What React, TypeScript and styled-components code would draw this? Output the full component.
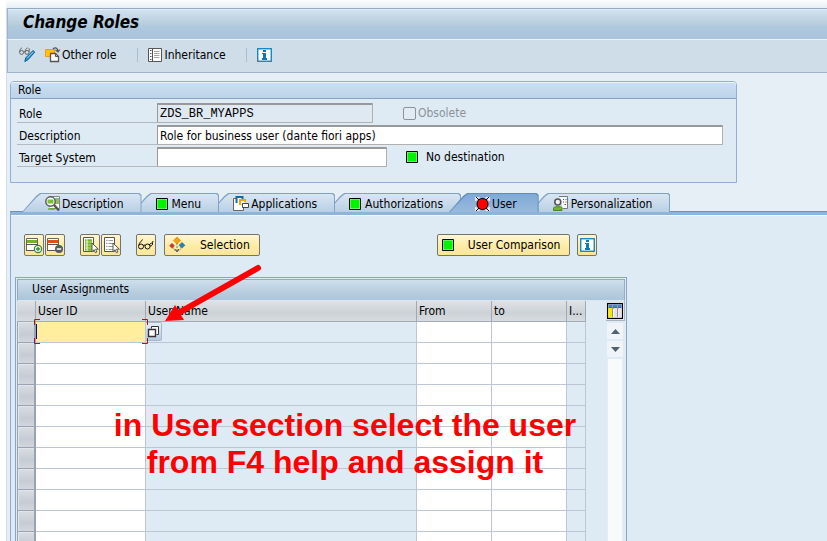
import React from "react";
import styled, { createGlobalStyle, css } from "styled-components";

const GlobalStyle = createGlobalStyle`
  *, *::before, *::after { box-sizing: border-box; }
  html, body { margin: 0; padding: 0; }
  body, button, input, table {
    font-family: "DejaVu Sans Condensed", "DejaVu Sans", sans-serif;
    font-size: 12px;
    line-height: 16px;
    color: #000;
  }
  svg { display: block; flex: none; }
`;

/* ---------- window ---------- */

const Page = styled.div`
  height: 100vh;
  overflow: hidden;
  display: flex;
  flex-direction: column;
  padding: 8px 0 0 6px;
  background: linear-gradient(#fdfdfe, #e7eff6 8px) 6px 0 no-repeat, #fff;
`;

const Window = styled.main`
  flex: 1;
  min-height: 0;
  display: flex;
  flex-direction: column;
  background: #e7eff6;
  border-left: 1px solid #d2dfea;
`;

const TitleBar = styled.header`
  height: 32px;
  flex: none;
  padding: 4px 15px;
  border-top: 1px solid #92aac4;
  border-left: 1px solid #9fb4ca;
  border-bottom: 1px solid #e9f2f8;
  box-shadow: inset 0 1px #e3edf5;
  background: linear-gradient(#d3e2f0, #b8cedd 50%, #aec8de 60%, #abc3dc);
`;

const Title = styled.h1`
  margin: 0;
  font-size: 17px;
  line-height: 18px;
  font-weight: bold;
  font-style: italic;
`;

const Toolbar = styled.div`
  height: 33px;
  flex: none;
  display: flex;
  align-items: center;
  padding: 0 11px 2px;
  border-left: 1px solid #9fb4ca;
  border-bottom: 1px solid #9fb4ca;
  background: #cfdde8;
`;

const ToolButton = styled.button`
  display: flex;
  align-items: center;
  gap: 2px;
  height: 22px;
  padding: 0;
  border: 0;
  background: none;
`;

const ToolGap = styled.span`
  width: 9px;
`;

const Divider = styled.span`
  width: 1px;
  height: 14px;
  margin: 0 10px 0 20px;
  background: #a7bed2;
`;

/* ---------- role group ---------- */

const Group = styled.section`
  flex: none;
  max-width: 727px;
  margin: 8px 3px 0;
  border: 1px solid #8fb0d0;
  border-radius: 4px 4px 0 0;
  background: #deeaf4;
`;

const GroupTitle = styled.h2`
  margin: 0;
  height: 17px;
  padding: 0 7px;
  font-size: 12px;
  line-height: 16px;
  font-weight: normal;
  border-bottom: 1px solid #86a3c6;
  border-radius: 3px 3px 0 0;
  background: linear-gradient(#cfdff0, #bcd3ea);
  box-shadow: inset 0 1px #eaf3fa;
`;

const Fields = styled.div`
  display: grid;
  gap: 2px;
  padding: 4px 13px 15px 6px;
`;

const FieldRow = styled.div`
  display: flex;
  align-items: flex-end;
`;

const FieldLabel = styled.label`
  width: 140px;
  height: 20px;
  flex: none;
  padding: 3px 2px 0;
  border-bottom: 1px solid #b3b9bf;
`;

const Field = styled.input<{ $width?: number; $mono?: boolean }>`
  height: 20px;
  min-width: 0;
  ${(p) => (p.$width ? css`width: ${p.$width}px;` : css`flex: 1;`)}
  padding: 1px 2px 0;
  border: 1px solid #b0b0b0;
  border-top: 2px solid #999;
  border-left-color: #999;
  border-radius: 1px;
  outline: 0;
  background: ${(p) => (p.readOnly ? "#dfe9f2" : "#fff")};
  ${(p) => p.$mono && css`font-family: "Liberation Mono", monospace;`}
`;

const Check = styled.label`
  display: flex;
  align-items: center;
  gap: 2px;
  height: 20px;
  margin-left: 30px;
  color: #8c9299;
  input {
    appearance: none;
    width: 13px;
    height: 13px;
    margin: 0;
    border: 1px solid #8f9398;
    border-radius: 2px;
    background: #e1ebf4;
  }
`;

const Status = styled.span`
  display: flex;
  align-items: center;
  gap: 8px;
  height: 20px;
  margin-left: 19px;
`;

/* ---------- tabs ---------- */

const TabList = styled.div`
  flex: none;
  display: flex;
  height: 19px;
  margin-top: 10px;
  padding-left: 15px;
  isolation: isolate;
`;

const TabButton = styled.button<{ $active?: boolean; $light?: boolean; $order: number }>`
  position: relative;
  z-index: ${(p) => (p.$active ? 20 : 10 - p.$order)};
  display: flex;
  align-items: center;
  gap: ${(p) => (p.$light ? 4 : 2)}px;
  height: 19px;
  margin-left: ${(p) => (p.$active ? -3 : 0)}px;
  margin-right: -9px;
  padding: ${(p) => (p.$active ? "2px 22px 0 26px" : "2px 18px 0 23px")};
  border: 0;
  background: none;
  white-space: nowrap;
  &::before, &::after {
    content: "";
    position: absolute;
    z-index: -1;
    inset: 0;
    clip-path: polygon(0 100%, 14px 3px, 18px 0, calc(100% - 2px) 0, 100% 2px, 100% 100%);
    background: ${(p) => (p.$active ? "#5f8dc0" : "#7fa3c6")};
  }
  &::after {
    inset: 1px 1px 0;
    background: ${(p) =>
      p.$active ? "linear-gradient(#7faad6, #9ab9dd)" : "linear-gradient(#d9e6f2, #b9cfe5)"};
  }
`;

const TabPanel = styled.section`
  flex: 1;
  min-height: 0;
  display: flex;
  flex-direction: column;
  margin-left: 3px;
  padding: 19px 0 0 4px;
  border-top: 3px solid #8fb4d9;
  border-left: 1px solid #8aaccf;
  background: #deeaf4;
  box-shadow: inset 0 1px #f0f6fb, 0 -1px #6b93bf;
`;

const Actions = styled.div`
  flex: none;
  display: flex;
  gap: 1px;
  padding-left: 9px;
`;

const Action = styled.button<{ $wide?: boolean }>`
  display: flex;
  align-items: center;
  justify-content: ${(p) => (p.$wide ? "flex-start" : "center")};
  gap: 14px;
  height: 22px;
  ${(p) => (p.$wide ? css`padding: 0 9px 0 4px;` : css`width: 20px; padding: 0;`)}
  border: 1px solid #77736a;
  border-radius: 2px;
  background: linear-gradient(#fff6d4, #fdeca4 55%, #fae69b);
  white-space: nowrap;
`;

const ActionGap = styled.span<{ $size: number }>`
  width: ${(p) => p.$size}px;
`;

/* ---------- table control ---------- */

const GridPanel = styled.div`
  position: relative;
  flex: 1;
  min-height: 0;
  max-width: 612px;
  margin-top: 21px;
  padding: 1px 1px 0;
  border: 1px solid #86a5c8;
  border-bottom: 0;
  display: flex;
  flex-direction: column;
`;

const GridTitle = styled.h2`
  flex: none;
  margin: 0;
  height: 22px;
  padding: 0 14px;
  font-size: 12px;
  line-height: 18px;
  font-weight: normal;
  border: 1px solid #97a9bf;
  border-bottom: 1px solid #dbe6ef;
  background: linear-gradient(#cfdfec, #b8cedf 60%, #abc5dc);
`;

const GridBody = styled.div`
  flex: 1;
  min-height: 0;
  overflow: hidden;
  display: flex;
  justify-content: space-between;
`;

const Table = styled.table`
  table-layout: fixed;
  width: 569px;
  flex: none;
  align-self: flex-start;
  border-collapse: separate;
  border-spacing: 0;
`;

const HeadCell = styled.th<{ $width: number }>`
  width: ${(p) => p.$width}px;
  height: 21px;
  padding: 0 2px;
  font-weight: normal;
  text-align: left;
  white-space: nowrap;
  border-right: 1px solid #a0a8b2;
  border-bottom: 1px solid #a3abb6;
  background: linear-gradient(#dfe2e5, #cdd2d7 60%, #d8dce0);
`;

const RowHead = styled.th`
  height: 21px;
  padding: 0;
  border: solid #9aa3b1;
  border-width: 0 2px 1px 1px;
  background: linear-gradient(#d9dde3, #c6ccd5 60%, #d2d6dd);
  box-shadow: inset 1px 1px #e2e5ea;
`;

const Cell = styled.td<{ $open?: boolean }>`
  position: relative;
  height: 21px;
  padding: 0;
  border-right: 1px solid #bcc6d4;
  border-bottom: 1px solid #bcc6d4;
  background: ${(p) => (p.$open ? "#fff" : "#deeaf4")};
`;

const CellInput = styled.input<{ $focused?: boolean }>`
  display: block;
  width: 100%;
  height: 20px;
  padding: 0 2px;
  border: 0;
  outline: 0;
  background: ${(p) => (p.$focused ? "#ffee9e" : "transparent")};
`;

const Caret = styled.span`
  position: absolute;
  left: 0;
  top: 2px;
  width: 1px;
  height: 15px;
  background: #10105a;
`;

const FocusFrame = styled.svg`
  position: absolute;
  z-index: 2;
  left: -2px;
  top: -3px;
  pointer-events: none;
`;

const HelpButton = styled.button`
  position: absolute;
  z-index: 1;
  left: 110px;
  top: 0;
  width: 16px;
  height: 19px;
  padding: 2px 1px;
  border: 1px solid #a9b8c9;
  border-left: 0;
  border-radius: 0 2px 2px 0;
  background: linear-gradient(#e6eef6, #b6cbe1);
`;

const SideBar = styled.div`
  width: 20px;
  flex: none;
  display: flex;
  flex-direction: column;
  align-items: center;
`;

const ConfigButton = styled.button`
  width: 19px;
  height: 20px;
  flex: none;
  padding: 1px 1px;
  border: 0;
  border-right: 1px solid #aab2bc;
  border-bottom: 1px solid #aab2bc;
  background: #dfe2e5;
`;

const ScrollButton = styled.button`
  width: 16px;
  height: 16px;
  flex: none;
  display: grid;
  place-items: center;
  margin-top: 2px;
  padding: 0;
  border: 0;
  background: #f0f4f9;
`;

const ScrollTrack = styled.div`
  width: 16px;
  flex: 1;
  margin-top: 2px;
  border: solid #e9ecf2;
  border-width: 0 1px;
  background: #f9fafc;
`;

const Note = styled.p`
  position: absolute;
  z-index: 3;
  top: 129px;
  left: 94px;
  width: 470px;
  margin: 0;
  font: bold 32px/37px "Liberation Sans", Arial, sans-serif;
  text-align: center;
  white-space: nowrap;
  color: #fe0000;
`;

const Arrow = styled.svg`
  position: absolute;
  z-index: 3;
  top: -15px;
  left: 148px;
`;

/* ---------- icons ---------- */

const GreenSquare = () => (
  <svg width="12" height="12" viewBox="0 0 12 12" aria-hidden="true">
    <rect width="12" height="12" rx="1" fill="#000" />
    <rect x="1" y="1" width="10" height="10" fill="#b9f5c0" />
    <rect x="1.5" y="1.5" width="9" height="9" fill="#00f400" />
  </svg>
);

const InfoIcon = () => (
  <svg width="15" height="14" viewBox="0 0 15 14" aria-hidden="true">
    <rect x=".75" y=".75" width="13.5" height="12.5" fill="#fff" stroke="#0a7abf" strokeWidth="1.3" />
    <path d="M6 2h3v2H6zM5 5h4v5h1v2H5v-2h1V6H5z" fill="#0a7abf" />
  </svg>
);

const DisplayChangeIcon = () => (
  <svg width="17" height="16" viewBox="0 0 17 16" fill="none" aria-hidden="true">
    <g stroke="#666" strokeWidth="1">
      <circle cx="2.6" cy="5.4" r="2" />
      <circle cx="8" cy="5.4" r="2" />
      <path d="M.6 5C.7 3 1.600 1.200 3 .8M6 5C6.200 3 7.200 1.200 8.600.8M4.500 4.800h1.600M10 5c.4-1.500.4-2.800 0-3.800" />
    </g>
    <path d="M14 3.500 15.700 5.200 9 12.700 5.800 14.600 6.700 10.900z" fill="#3492c6" stroke="#075f94" />
    <path d="M8.300 11 14 5" stroke="#91cbea" />
  </svg>
);

const OtherRoleIcon = () => (
  <svg width="15" height="16" viewBox="0 0 15 16" fill="none" aria-hidden="true">
    <path d="M.5 2.5h9v7h-9z" fill="#ffc20e" stroke="#f39a12" />
    <path d="M5.5 6.5h5l3 3v5h-8z" fill="#fff" stroke="#555" strokeWidth="1.3" />
    <path d="M10.5 6.5v3h3" stroke="#555" />
    <path d="M8 2c2-2 5-1.2 5 2.5M10.5 3l2.500 2 1.700-2.400" stroke="#555" strokeWidth="1.2" />
  </svg>
);

const InheritanceIcon = () => (
  <svg width="15" height="14" viewBox="0 0 15 14" fill="none" aria-hidden="true">
    <path d="M.5.5h13v13H.5z" fill="#fff" stroke="#555" />
    <path d="M4.5 1v12" stroke="#555" />
    <path d="M2 2.5h1.500M2 5.5h1.500M2 8.500h1.500M2 11.500h1.500" stroke="#555" />
    <path d="M6 3.5h5.500M6 5.5h5.500M6 7.5h5.500M6 9.5h5.500" stroke="#a7a7a7" />
  </svg>
);

const DescriptionIcon = () => (
  <svg width="15" height="16" viewBox="0 0 15 16" fill="none" aria-hidden="true">
    <path d="M4.5.5h10v12H5" fill="#f7faf7" stroke="#888" />
    <path d="M10 3h4M10 5h4M10 7h4M3 13h7" stroke="#6cab2f" strokeWidth="1.5" />
    <circle cx="5.5" cy="5.5" r="4.7" fill="#fff" stroke="#555" strokeWidth="1.4" />
    <path d="M2.5 3.5h6v4h-6z" fill="#7bc032" />
    <path d="m9 9 5 5.5" stroke="#555" strokeWidth="2.4" />
  </svg>
);

const ApplicationsIcon = () => (
  <svg width="16" height="16" viewBox="0 0 16 16" fill="none" aria-hidden="true">
    <path d="M3.5 2.5h-3v12h10v-3" fill="#fff" stroke="#666" />
    <path d="M3.5 7V1h6v2" fill="#fff" stroke="#156a9b" strokeWidth="2" />
    <path d="M7 9V4h5v2" fill="#fff" stroke="#f5a30a" strokeWidth="2" />
    <path d="M9.5 7.5h6v4h-6z" fill="#fff" stroke="#444" />
  </svg>
);

const RedLightIcon = () => (
  <svg width="15" height="14" viewBox="0 0 15 14" aria-hidden="true">
    <path d="M0 0h5L1 4H0zM15 0h-5l4 4h1zM0 14h5l-4-4H0zM15 14h-5l4-4h1z" fill="#f8e9ef" />
    <path d="m1 0 3 3M14 0l-3 3M1 14l3-3M14 14l-3-3" stroke="#000" />
    <circle cx="7.5" cy="7" r="5.5" fill="#fe0000" stroke="#000" />
  </svg>
);

const PersonIcon = () => (
  <svg width="16" height="16" viewBox="0 0 16 16" fill="none" aria-hidden="true">
    <path d="M6 .5h8.500v12H10" fill="#fafafa" stroke="#777" />
    <path d="M10 3.5h1M12.500 3.5h1M10 6h1M12.500 6h1M11.500 8.500h1.500" stroke="#555" strokeWidth="1.2" />
    <circle cx="4.8" cy="6" r="3" fill="#f2f2f2" stroke="#555" strokeWidth="1.6" />
    <path d="M.5 14.500v-2c0-1 1-1.700 2-1.700h5c1 0 1.500.7 1.500 1.700v2z" fill="#72b62b" stroke="#4e8220" />
  </svg>
);

const RowEditIcon = ({ remove = false }: { remove?: boolean }) => (
  <svg width="18" height="18" viewBox="0 0 18 18" fill="none" aria-hidden="true">
    <path d="M1.5 2.5h11v12h-11z" fill="#fff" stroke="#666" />
    <path d="M2 5.5h10" stroke={remove ? "#dc5215" : "#76b51c"} strokeWidth="3" />
    <path d="M1 8.5h12M1 14.500h8" stroke="#555" />
    {remove ? (
      <>
        <circle cx="13" cy="13" r="4" fill="#555b63" />
        <path d="M10.800 13h4.400" stroke="#fff" strokeWidth="1.5" />
      </>
    ) : (
      <>
        <circle cx="13" cy="13" r="3.6" fill="#fff" stroke="#37863b" strokeWidth="1.2" />
        <path d="M10.800 13h4.400M13 10.800v4.400" stroke="#37863b" strokeWidth="1.3" />
      </>
    )}
  </svg>
);

const SelectRowsIcon = ({ all = false }: { all?: boolean }) => (
  <svg width="17" height="18" viewBox="0 0 17 18" fill="none" aria-hidden="true">
    <path d="M1.5 1.5h10v14h-10z" fill="#fff" stroke="#555" />
    <path
      d="M3 4.5h1.500M3 7.5h1.500M3 10.500h1.500M3 13.500h1.500M5.500 4.5h4.500M5.500 7.5h4.500M5.500 10.500h4.500M5.500 13.500h4.500"
      stroke={all ? "#76b51c" : "#999"}
      strokeWidth={all ? 2.5 : 1}
    />
    <path d="M10 7v8.700l2-2 1.300 3 1.600-.7-1.300-2.800h2.700z" fill="#fff" stroke="#555" />
  </svg>
);

const GlassesIcon = () => (
  <svg width="18" height="16" viewBox="0 0 18 16" fill="none" stroke="#111" aria-hidden="true">
    <circle cx="4" cy="9.5" r="2.5" />
    <circle cx="10.5" cy="9.5" r="2.5" />
    <path d="M1.800 8.500C2 5.500 4.500 4.500 5.500 2.500M6.200 8.500 8 8M12.300 8c.7-2.500 4-1.200 3.700-4M13 9c2 0 2.800-1.400 2.500-3" />
  </svg>
);

const SelectionIcon = () => (
  <svg width="17" height="16" viewBox="0 0 17 16" fill="none" aria-hidden="true">
    <path d="M8 6v8M4 9.500c0 3 1 4 4 4s4-1 4-4" stroke="#777" strokeDasharray="2 1" />
    <path d="m8 0 3.500 3.500L8 7 4.500 3.500z" fill="#f7a30b" stroke="#cf7a08" strokeWidth=".6" />
    <path d="m3 6 2.800 2.800L3 11.600.2 8.800z" fill="#c63d2f" />
    <path d="m13 5 3.300 3.300L13 11.600 9.700 8.300z" fill="#2d7fae" />
    <path d="m6 12 2 3 2-3" stroke="#555" />
  </svg>
);

const StackIcon = () => (
  <svg width="13" height="13" viewBox="0 0 13 13" fill="none" aria-hidden="true">
    <path d="M4.500 3.500v-2h7v8h-2" fill="#fff" stroke="#333" />
    <path d="M1.500 4.500h7v7h-7z" fill="#fff" stroke="#333" strokeWidth="1.400" />
  </svg>
);

const ConfigIcon = () => (
  <svg width="16" height="16" viewBox="0 0 16 16" aria-hidden="true">
    <rect x=".6" y=".6" width="14.8" height="14.8" fill="#fff" stroke="#000" strokeWidth="1.2" />
    <path d="M1.500 1.500h13v4h-13z" fill="#2a72b8" />
    <path d="M1.500 5h4v9h-4z" fill="#ffe800" />
    <path d="M7 5h3v9H7zM11.500 5h3v9h-3z" fill="#e3e3e6" />
    <path d="M5.500 2v12M10.500 2v12" stroke="#8f9398" />
    <path d="M1.500 3h13" stroke="#8dbbe0" strokeDasharray="1 1" />
  </svg>
);

const Triangle = ({ down = false }: { down?: boolean }) => (
  <svg width="9" height="5" viewBox="0 0 9 5" aria-hidden="true">
    <path d={down ? "M0 0h9L4.500 5z" : "M0 5h9L4.500 0z"} fill="#4f6070" />
  </svg>
);

/* ---------- data ---------- */

const tabs = [
  { label: "Description", icon: <DescriptionIcon /> },
  { label: "Menu", icon: <GreenSquare />, light: true },
  { label: "Applications", icon: <ApplicationsIcon /> },
  { label: "Authorizations", icon: <GreenSquare />, light: true },
  { label: "User", icon: <RedLightIcon />, active: true },
  { label: "Personalization", icon: <PersonIcon /> },
];

const columns = [
  { label: "User ID", width: 110, open: true },
  { label: "User Name", width: 271 },
  { label: "From", width: 75, open: true },
  { label: "to", width: 75, open: true },
  { label: "I...", width: 19 },
];

const rows = Array.from({ length: 24 }, (_, i) => i);

export default function App() {
  return (
    <>
      <GlobalStyle />
      <Page>
        <Window>
          <TitleBar>
            <Title>Change Roles</Title>
          </TitleBar>
          <Toolbar>
            <ToolButton aria-label="Display or change"><DisplayChangeIcon /></ToolButton>
            <ToolGap />
            <ToolButton><OtherRoleIcon />Other role</ToolButton>
            <Divider />
            <ToolButton><InheritanceIcon />Inheritance</ToolButton>
            <Divider />
            <ToolButton aria-label="Information"><InfoIcon /></ToolButton>
          </Toolbar>

          <Group>
            <GroupTitle>Role</GroupTitle>
            <Fields>
              <FieldRow>
                <FieldLabel htmlFor="role">Role</FieldLabel>
                <Field id="role" $width={216} $mono readOnly defaultValue="ZDS_BR_MYAPPS" />
                <Check><input type="checkbox" disabled />Obsolete</Check>
              </FieldRow>
              <FieldRow>
                <FieldLabel htmlFor="description">Description</FieldLabel>
                <Field id="description" defaultValue="Role for business user (dante fiori apps)" />
              </FieldRow>
              <FieldRow>
                <FieldLabel htmlFor="target">Target System</FieldLabel>
                <Field id="target" $width={230} />
                <Status><GreenSquare />No destination</Status>
              </FieldRow>
            </Fields>
          </Group>

          <TabList role="tablist">
            {tabs.map((tab, i) => (
              <TabButton
                key={tab.label}
                role="tab"
                aria-selected={!!tab.active}
                $active={tab.active}
                $light={tab.light}
                $order={i}
              >
                {tab.icon}
                {tab.label}
              </TabButton>
            ))}
          </TabList>

          <TabPanel role="tabpanel">
            <Actions>
              <Action aria-label="Insert row"><RowEditIcon /></Action>
              <Action aria-label="Delete row"><RowEditIcon remove /></Action>
              <ActionGap $size={13} />
              <Action aria-label="Select all"><SelectRowsIcon all /></Action>
              <Action aria-label="Deselect all"><SelectRowsIcon /></Action>
              <ActionGap $size={13} />
              <Action aria-label="Display"><GlassesIcon /></Action>
              <ActionGap $size={6} />
              <Action $wide><SelectionIcon />Selection</Action>
              <ActionGap $size={175} />
              <Action $wide><GreenSquare />User Comparison</Action>
              <ActionGap $size={5} />
              <Action aria-label="Information"><InfoIcon /></Action>
            </Actions>

            <GridPanel>
              <GridTitle>User Assignments</GridTitle>
              <GridBody>
                <Table aria-label="User Assignments">
                  <thead>
                    <tr>
                      <HeadCell $width={19} aria-label="Row" />
                      {columns.map((c) => (
                        <HeadCell key={c.label} $width={c.width}>{c.label}</HeadCell>
                      ))}
                    </tr>
                  </thead>
                  <tbody>
                    {rows.map((row) => (
                      <tr key={row}>
                        <RowHead scope="row" aria-label={`Row ${row + 1}`} />
                        {columns.map((c, i) => (
                          <Cell key={c.label} $open={c.open}>
                            {c.open && (
                              <CellInput aria-label={`${c.label}, row ${row + 1}`} $focused={row === 0 && i === 0} />
                            )}
                            {row === 0 && i === 0 && (
                              <>
                                <Caret />
                                <HelpButton aria-label="Input help"><StackIcon /></HelpButton>
                                <FocusFrame width="114" height="25" fill="none" stroke="#a01818" aria-hidden="true">
                                  <path d="M.5 6V.5H6M108 .5h5.500V6M.5 19v5.500H6M108 24.500h5.500V19" />
                                </FocusFrame>
                              </>
                            )}
                          </Cell>
                        ))}
                      </tr>
                    ))}
                  </tbody>
                </Table>
                <SideBar>
                  <ConfigButton aria-label="Table settings"><ConfigIcon /></ConfigButton>
                  <ScrollButton aria-label="Scroll up"><Triangle /></ScrollButton>
                  <ScrollButton aria-label="Scroll down"><Triangle down /></ScrollButton>
                  <ScrollTrack />
                </SideBar>
              </GridBody>
              <Arrow width="100" height="62" viewBox="0 0 100 62" aria-hidden="true">
                <path d="M94 5 16 49" stroke="#fe0000" strokeWidth="6" strokeLinecap="round" />
                <path d="M1 58 11 42l9 15z" fill="#fe0000" />
              </Arrow>
              <Note>
                in User section select the user
                <br />
                from F4 help and assign it
              </Note>
            </GridPanel>
          </TabPanel>
        </Window>
      </Page>
    </>
  );
}
